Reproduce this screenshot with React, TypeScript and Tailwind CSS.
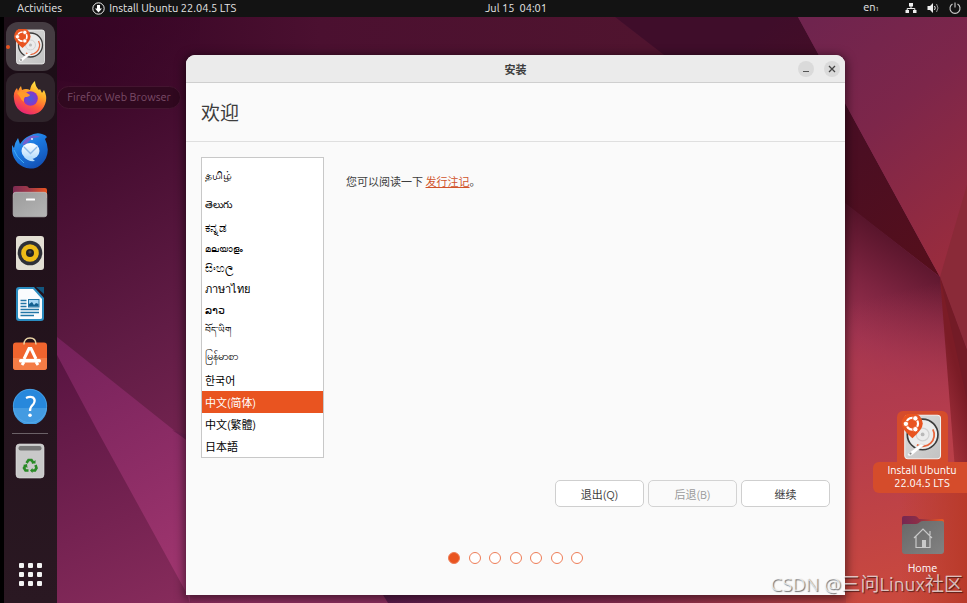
import React from "react";

const languages = [
  { name: "தமிழ்", style: "h-[34px]" },
  { name: "తెలుగు", style: "h-[26px] text-[10px]" },
  { name: "ಕನ್ನಡ", style: "h-[20px] text-[12px]" },
  { name: "മലയാളം", style: "h-[21px] text-[9px]" },
  { name: "සිංහල", style: "h-[18px]" },
  { name: "ภาษาไทย", style: "h-[24px]" },
  { name: "ລາວ", style: "h-[18px]" },
  { name: "བོད་ཡིག", style: "h-[22px] text-[9px]" },
  { name: "မြန်မာစာ", style: "h-[28px] pt-[2px]" },
  { name: "한국어", style: "h-[22px] pt-[2px]" },
  { name: "中文(简体)", style: "h-[22px] pt-[2px]" },
  { name: "中文(繁體)", style: "h-[22px] pt-[2px]" },
  { name: "日本語", style: "h-[22px] pt-[2px]" },
];

function Wallpaper() {
  return (
    <svg
      className="absolute inset-0 h-full w-full"
      viewBox="0 0 967 603"
      preserveAspectRatio="none"
      aria-hidden="true"
    >
      <defs>
        <linearGradient id="base" gradientUnits="userSpaceOnUse" x1="60" y1="60" x2="330" y2="560">
          <stop offset="0" stopColor="#350424" />
          <stop offset="0.5" stopColor="#611c45" />
          <stop offset="1" stopColor="#8f2f60" />
        </linearGradient>
        <linearGradient id="top" gradientUnits="userSpaceOnUse" x1="57" y1="0" x2="640" y2="0">
          <stop offset="0" stopColor="#340324" />
          <stop offset="0.45" stopColor="#4b1030" />
          <stop offset="1" stopColor="#50142f" />
        </linearGradient>
        <linearGradient id="ray" gradientUnits="userSpaceOnUse" x1="60" y1="340" x2="190" y2="580">
          <stop offset="0" stopColor="#75215a" />
          <stop offset="1" stopColor="#a0366f" />
        </linearGradient>
        <linearGradient id="leftDark" gradientUnits="userSpaceOnUse" x1="57" y1="340" x2="170" y2="603">
          <stop offset="0" stopColor="#561340" />
          <stop offset="1" stopColor="#862b5b" />
        </linearGradient>
        <linearGradient id="sky" gradientUnits="userSpaceOnUse" x1="800" y1="30" x2="967" y2="240">
          <stop offset="0" stopColor="#6f244e" />
          <stop offset="0.45" stopColor="#7d264a" />
          <stop offset="1" stopColor="#982c3e" />
        </linearGradient>
        <linearGradient id="shade" gradientUnits="userSpaceOnUse" x1="760" y1="30" x2="940" y2="277">
          <stop offset="0" stopColor="#3f0d2a" />
          <stop offset="1" stopColor="#560f1b" />
        </linearGradient>
        <linearGradient id="slope" gradientUnits="userSpaceOnUse" x1="925" y1="240" x2="850" y2="365">
          <stop offset="0" stopColor="#4f1126" />
          <stop offset="0.45" stopColor="#7d2440" />
          <stop offset="0.8" stopColor="#9c3250" />
          <stop offset="1" stopColor="#a83850" />
        </linearGradient>
        <linearGradient id="floor" gradientUnits="userSpaceOnUse" x1="860" y1="300" x2="930" y2="603">
          <stop offset="0" stopColor="#ab394f" stopOpacity="0" />
          <stop offset="0.4" stopColor="#b43c4d" />
          <stop offset="1" stopColor="#cb4a3d" />
        </linearGradient>
        <linearGradient id="edge" gradientUnits="userSpaceOnUse" x1="920" y1="430" x2="970" y2="416">
          <stop offset="0" stopColor="#8d2026" stopOpacity="0" />
          <stop offset="1" stopColor="#7b1c26" />
        </linearGradient>
        <linearGradient id="corner" gradientUnits="userSpaceOnUse" x1="900" y1="500" x2="967" y2="500">
          <stop offset="0" stopColor="#bb3e2c" stopOpacity="0" />
          <stop offset="1" stopColor="#b93a2a" />
        </linearGradient>
        <linearGradient id="bottom" gradientUnits="userSpaceOnUse" x1="380" y1="0" x2="900" y2="0">
          <stop offset="0" stopColor="#5a1b4b" />
          <stop offset="0.5" stopColor="#8b2d50" />
          <stop offset="1" stopColor="#c8483d" />
        </linearGradient>
      </defs>
      <rect width="967" height="603" fill="url(#base)" />
      <path d="M57 17H640L660 60H300L186 100L57 80Z" fill="url(#top)" opacity="0.6" />
      <path d="M200 17H615L680 66H200Z" fill="url(#top)" />
      <path d="M0 290L57 337L186 592L192 603H0Z" fill="url(#leftDark)" />
      <path d="M40 323L57 337L190 443V603L186 592L97 430Z" fill="url(#ray)" />
      <path d="M172 430L190 436V442Z" fill="#6d2050" />
      <path d="M615 17H798L940 277L840 200L668 58Z" fill="url(#shade)" />
      <path d="M798 17H967V300L940 277Z" fill="url(#sky)" />
      <path d="M967 185L940 277L967 350Z" fill="#8a2a38" />
      <path d="M840 199L940 277L967 400V603H840Z" fill="url(#slope)" />
      <path d="M840 300L940 277L967 400V603H840Z" fill="url(#floor)" />
      <path d="M940 277L967 350V490L955 470Z" fill="url(#edge)" />
      <path d="M940 277L967 350V400Z" fill="#731b26" />
      <path d="M900 470H967V603H900Z" fill="url(#corner)" />
      <path d="M380 590H846V603H388Z" fill="url(#bottom)" />
    </svg>
  );
}

function InstallerIcon({ className }: { className: string }) {
  return (
    <svg className={className} viewBox="0 0 36 36" aria-hidden="true">
      <defs>
        <linearGradient id="disk" x1="0" y1="0" x2="1" y2="1">
          <stop offset="0" stopColor="#dcdcdc" />
          <stop offset="1" stopColor="#c2c2c2" />
        </linearGradient>
      </defs>
      <rect x="4.500" y="1" width="28" height="34" rx="2.500" fill="url(#disk)" stroke="#f1f1f1" strokeWidth="0.800" />
      <circle cx="18.500" cy="16" r="12" fill="#ececec" stroke="#3c3c3c" strokeWidth="1.300" />
      <circle cx="18.500" cy="16" r="5" fill="none" stroke="#d2d2d2" />
      <circle cx="18.500" cy="16" r="1.500" fill="#b9b9b9" />
      <path d="M26.500 12A9 9 0 0 1 14 24" fill="none" stroke="#e9663c" strokeWidth="1.400" />
      <path d="M7 31L17 23.500L20 24L10 32.500Q6 33.500 7 31Z" fill="#fff" stroke="#ccc" strokeWidth="0.400" />
      <circle cx="9" cy="31" r="0.900" fill="#888" />
      <path d="M10.500 19Q2 12 2 7.500A8.300 8.300 0 0 1 18.600 7.500Q18.600 12 10.500 19Z" fill="#e95420" />
      <circle cx="10.300" cy="7.600" r="4.600" fill="none" stroke="#fff" strokeWidth="1.700" />
      {[[5.4, 7.7], [12.8, 3.4], [12.8, 11.9]].map(([x, y]) => (
        <circle key={y} cx={x} cy={y} r="2.100" fill="#fff" stroke="#e95420" strokeWidth="0.700" />
      ))}
    </svg>
  );
}

function FirefoxIcon() {
  return (
    <svg className="size-9" viewBox="0 0 36 36" aria-hidden="true">
      <defs>
        <linearGradient id="fox" x1="0.8" y1="0" x2="0.3" y2="1">
          <stop offset="0" stopColor="#fff44f" />
          <stop offset="0.35" stopColor="#ffab28" />
          <stop offset="0.65" stopColor="#ff5b37" />
          <stop offset="1" stopColor="#e5207b" />
        </linearGradient>
        <radialGradient id="globe">
          <stop offset="0" stopColor="#4a5bdc" />
          <stop offset="1" stopColor="#8a35c8" />
        </radialGradient>
      </defs>
      <path d="M2 19Q1 12 5 8L6 11Q7 8 9 6L10 10Q14 8 18 10Q19 4 23 1Q23 6 27 10L28 9L30 13L32 10Q35 16 34 21C32 30 26 35 18 34.500S3 29 2 19Z" fill="url(#fox)" />
      <circle cx="18.500" cy="18.500" r="7.300" fill="url(#globe)" />
      <path d="M5 13L9 11L15 13L18 15Q17 17 13 17Q11 19 12 22Q9 20 8 17Z" fill="#ff9a28" />
    </svg>
  );
}

function ThunderbirdIcon() {
  return (
    <svg className="size-9" viewBox="0 0 36 36" aria-hidden="true">
      <defs>
        <linearGradient id="bird" x1="0" y1="0" x2="0.6" y2="1">
          <stop offset="0" stopColor="#3aa6f6" />
          <stop offset="0.5" stopColor="#1b78df" />
          <stop offset="1" stopColor="#1353b8" />
        </linearGradient>
        <linearGradient id="mail" x1="0" y1="0" x2="0" y2="1">
          <stop offset="0" stopColor="#ffffff" />
          <stop offset="1" stopColor="#b5dcfc" />
        </linearGradient>
      </defs>
      <path d="M0 12L2 15Q3 9 6 5L8 11Q12 5 17 3Q24 -1 30 1Q34 2 35 4L33 6Q38 16 34 25C30 33 24 36 18 35.500C8 35 1 27 0 18Z" fill="url(#bird)" />
      <path d="M10 12Q13 4 21 2.500Q26 2 28 4Q20 4 14 11Z" fill="#7461cf" />
      <path d="M2 17Q4 24 12 30" fill="none" stroke="#42adf5" />
      <ellipse cx="18.500" cy="18" rx="9" ry="8" fill="url(#mail)" />
      <path d="M12 24Q16 29 23 28Q20 26 20 23Z" fill="#b5dcfc" />
      <path d="M12 14L18.500 20.500L25 14" fill="none" stroke="#8fbbe8" strokeWidth="1.400" />
      <circle cx="20" cy="6" r="0.900" fill="#fff" />
    </svg>
  );
}

function FilesIcon() {
  return (
    <svg className="size-9" viewBox="0 0 36 36" aria-hidden="true">
      <defs>
        <linearGradient id="tab" x1="0" x2="1">
          <stop offset="0" stopColor="#7c2a52" />
          <stop offset="0.5" stopColor="#a33a48" />
          <stop offset="1" stopColor="#e95420" />
        </linearGradient>
        <linearGradient id="drawer" x1="0" y1="0" x2="1" y2="1">
          <stop offset="0" stopColor="#9b9b9b" />
          <stop offset="1" stopColor="#b5b5b5" />
        </linearGradient>
      </defs>
      <path d="M1 4Q1 2 3 2H14Q16 2 17 4H33Q35 4 35 6V14H1Z" fill="url(#tab)" />
      <rect x="1.200" y="8.300" width="33.600" height="24.500" rx="2.500" fill="url(#drawer)" stroke="#c2c2c2" strokeWidth="0.700" />
      <rect x="14" y="14.500" width="9" height="2" rx="0.500" fill="#fff" />
    </svg>
  );
}

function RhythmboxIcon() {
  return (
    <svg className="size-9" viewBox="0 0 36 36" aria-hidden="true">
      <rect x="4" y="1" width="28" height="34" rx="3" fill="#e3dfd3" />
      <circle cx="18" cy="18" r="12.300" fill="#2e3037" />
      <circle cx="18" cy="18" r="8.800" fill="#eebb17" />
      <circle cx="18" cy="18" r="4" fill="#202126" />
      <circle cx="18" cy="17" r="1.600" fill="#45474d" />
    </svg>
  );
}

function WriterIcon() {
  return (
    <svg className="size-9" viewBox="0 0 36 36" aria-hidden="true">
      <path d="M7 1H22L32 12V32Q32 35 29 35H7Q4 35 4 32V4Q4 1 7 1Z" fill="#2a8cc0" />
      <path d="M24 1H32V8Z" fill="#12567e" />
      <path d="M8 3H21L30 13V32Q30 33 28 33H8Q6 33 6 31V5Q6 3 8 3Z" fill="#fafcfe" />
      <path d="M8.500 14.500H14.500M8.500 17.500H14.500M8.500 20.500H14.500M8.500 23.500H27M8.500 26.500H27M8.500 29.500H22" stroke="#2276a6" strokeWidth="1.400" />
      <rect x="16.500" y="13.500" width="10.500" height="7.500" fill="#a7d6f4" stroke="#2276a6" />
      <path d="M17 20.500V18L20 16L22 19L24 17L26.500 18V20.500Z" fill="#146090" />
    </svg>
  );
}

function SoftwareIcon() {
  return (
    <svg className="size-9" viewBox="0 0 36 36" aria-hidden="true">
      <rect x="1" y="5.500" width="34" height="27.500" rx="3" fill="#f0642e" />
      <path d="M1 21H35V30Q35 33 32 33H4Q1 33 1 30Z" fill="#f47c46" />
      <path d="M12 7.500Q12 1 18 1T24 7.500" fill="none" stroke="#ead5a7" strokeWidth="1.400" />
      <path d="M12 22L17 11.500H19L24 22M10 28L12 25M26 28L24 25" fill="none" stroke="#fff" strokeWidth="3" />
      <rect x="7" y="22" width="22" height="3.500" rx="1.500" fill="#fff" />
    </svg>
  );
}

function HelpIcon() {
  return (
    <svg className="size-9" viewBox="0 0 36 36" aria-hidden="true">
      <circle cx="18" cy="18" r="17" fill="#2788dc" />
      <path d="M1 20H35A17 17 0 0 1 1 20Z" fill="#439be2" />
      <circle cx="18" cy="18" r="16.700" fill="none" stroke="#5cb1ee" strokeWidth="0.600" />
      <path d="M14 10Q18 8 21 9.500Q24 12 21.500 16Q18 19 18 23" fill="none" stroke="#fff" strokeWidth="2.300" />
      <circle cx="18" cy="27.300" r="1.800" fill="#fff" />
    </svg>
  );
}

function TrashIcon() {
  return (
    <svg className="size-9" viewBox="0 0 36 36" aria-hidden="true">
      <rect x="4" y="1" width="28" height="34" rx="3.500" fill="#c9c9c9" stroke="#e4e4e4" strokeWidth="0.600" />
      <rect x="6.500" y="3" width="23" height="4.500" rx="2" fill="#777" />
      <g fill="none" stroke="#2a8a26" strokeWidth="2.600">
        <path d="M14.500 20L16.500 17H19.500L21.500 20" />
        <path d="M23.500 22L24.500 25L23 27.500H20" />
        <path d="M16.500 27.500H13.500L12 25L13.500 22.500" />
      </g>
      <path d="M19.500 20.500L23.500 20.500L23.500 17ZM20.500 25V30L18 27.500ZM11 22L15 21L15.500 25Z" fill="#2a8a26" />
    </svg>
  );
}

function HomeFolder() {
  return (
    <svg className="h-[40px] w-[44px]" viewBox="0 0 44 40" aria-hidden="true">
      <defs>
        <linearGradient id="homeTab" x1="0" x2="1">
          <stop offset="0" stopColor="#762752" />
          <stop offset="0.4" stopColor="#8d2e46" />
          <stop offset="1" stopColor="#ed5a22" />
        </linearGradient>
        <linearGradient id="homeBody" x1="0" y1="0" x2="1" y2="1">
          <stop offset="0" stopColor="#686868" />
          <stop offset="1" stopColor="#828282" />
        </linearGradient>
      </defs>
      <path d="M1 3Q1 1 3 1H14Q16 1 18 4H41Q43 4 43 6V15H1Z" fill="url(#homeTab)" />
      <path d="M1 11Q1 9 3 9H15Q17 9 19 7Q20 6 22 6H41Q43 6 43 8V36Q43 39 40 39H4Q1 39 1 36Z" fill="url(#homeBody)" />
      <path d="M13 23L22 14L31 23M15 21.500V32.500H29V21.500M29 16V20" fill="none" stroke="#c9c9c9" strokeWidth="1.200" />
      <rect x="21" y="25" width="4" height="7.500" fill="#c9c9c9" />
    </svg>
  );
}

const dockApps = [
  { name: "Thunderbird Mail", icon: <ThunderbirdIcon /> },
  { name: "Files", icon: <FilesIcon /> },
  { name: "Rhythmbox", icon: <RhythmboxIcon /> },
  { name: "LibreOffice Writer", icon: <WriterIcon /> },
  { name: "Ubuntu Software", icon: <SoftwareIcon /> },
  { name: "Help", icon: <HelpIcon /> },
];

function TopBar() {
  return (
    <header className="relative grid h-[17px] shrink-0 grid-cols-[485fr_auto_420fr] items-center bg-[#131313] pb-[2px] text-[11px] leading-[15px] text-[#e6e6e6]">
      <div className="flex items-center gap-[30px] pl-[17px]">
        <button type="button">Activities</button>
        <button type="button" className="flex items-center gap-1">
          <svg className="size-[13px]" viewBox="0 0 13 13" aria-hidden="true">
            <circle cx="6.500" cy="6.500" r="5.700" fill="none" stroke="#eee" />
            <path d="M5 3H8V6.500H10L6.500 10.500L3 6.500H5Z" fill="#fff" />
          </svg>
          Install Ubuntu 22.04.5 LTS
        </button>
      </div>
      <button type="button" className="whitespace-pre">Jul 15  04:01</button>
      <div className="flex items-center justify-end pr-[6px]">
        <button type="button" className="mr-[26px] flex items-baseline">
          en<span className="text-[6px]">1</span>
        </button>
        <button type="button" aria-label="System menu" className="flex items-center gap-[10px]">
          <svg className="size-[12px]" viewBox="0 0 12 12" aria-hidden="true">
            <path d="M4 1H8V4.500H4ZM0.500 8H4V11H0.500ZM8 8H11.500V11H8Z" fill="#eee" />
            <path d="M6 4V6.500M2.200 8V6.500H9.800V8" fill="none" stroke="#eee" />
          </svg>
          <svg className="size-[12px]" viewBox="0 0 12 12" aria-hidden="true">
            <path d="M0.500 4H3L6 1V11L3 8H0.500Z" fill="#eee" />
            <path d="M7.500 4Q9 6 7.500 8" fill="none" stroke="#eee" />
            <path d="M9.500 2Q12.500 6 9.500 10" fill="none" stroke="#999" />
          </svg>
          <svg className="size-[12px]" viewBox="0 0 12 12" aria-hidden="true">
            <path d="M3.500 2A5 5 0 1 0 8.500 2M6 0.500V5.500" fill="none" stroke="#ccc" strokeWidth="1.100" />
          </svg>
        </button>
      </div>
    </header>
  );
}

function Dock() {
  return (
    <nav
      aria-label="Dock"
      className="flex w-[57px] shrink-0 flex-col items-center border-l-4 border-black bg-linear-to-b from-[#1b0d16] to-[#2a1822] pt-[5px] pr-px pb-[17px]"
    >
      <button
        type="button"
        aria-label="Install Ubuntu 22.04.5 LTS"
        className="relative flex size-[49px] items-center justify-center rounded-xl bg-[#453c42]"
      >
        <span className="absolute left-0 size-1 rounded-full bg-[#e95420]" />
        <InstallerIcon className="size-9" />
      </button>
      <button
        type="button"
        aria-label="Firefox Web Browser"
        className="mt-[2px] mb-[11px] flex size-[49px] items-center justify-center rounded-xl bg-[#2f242b]"
      >
        <FirefoxIcon />
      </button>
      <div className="flex flex-col gap-[15px]">
        {dockApps.map((app) => (
          <button key={app.name} type="button" aria-label={app.name}>
            {app.icon}
          </button>
        ))}
      </div>
      <hr className="mt-[9px] mb-[9px] w-9 border-[#6b6167]" />
      <button type="button" aria-label="Trash">
        <TrashIcon />
      </button>
      <button type="button" aria-label="Show Applications" className="mt-auto grid grid-cols-3 gap-1">
        {Array.from({ length: 9 }, (_, i) => (
          <span key={i} className="size-[5px] rounded-[1px] bg-[#f3f3f3]" />
        ))}
      </button>
    </nav>
  );
}

function InstallerWindow() {
  return (
    <main className="mt-[38px] mb-[8px] flex min-w-0 flex-1 flex-col overflow-hidden rounded-t-[9px] bg-[#fafafa] text-[#3d3d3d] shadow-[0_2px_10px_2px_rgba(0,0,0,0.5)]">
      <div className="grid h-[28px] shrink-0 grid-cols-[1fr_auto_1fr] items-center border-b border-[#cfcfcf] bg-[#ebebeb]">
        <h1 className="col-start-2 pt-[2px] text-[11px] leading-4 font-bold">安装</h1>
        <div className="flex justify-end gap-[10px] pr-[5px]">
          <button type="button" aria-label="Minimize" className="flex size-4 items-center justify-center rounded-full bg-[#dadada]">
            <svg className="size-2" viewBox="0 0 8 8" aria-hidden="true">
              <path d="M1 6.500H7" stroke="#555" />
            </svg>
          </button>
          <button type="button" aria-label="Close" className="flex size-4 items-center justify-center rounded-full bg-[#dadada]">
            <svg className="size-2" viewBox="0 0 8 8" aria-hidden="true">
              <path d="M1 1L7 7M7 1L1 7" stroke="#444" strokeWidth="1.300" />
            </svg>
          </button>
        </div>
      </div>
      <div className="flex h-[59px] shrink-0 items-center border-b border-[#dfdfdf] px-[15px] pt-[2px]">
        <h2 className="text-[19px] leading-6">欢迎</h2>
      </div>
      <div className="flex flex-1 flex-col px-[15px] pt-[15px] pb-[31px]">
        <div className="flex items-start gap-[22px]">
          <fieldset
            aria-label="Language"
            className="w-[123px] border border-[#c8c8c8] bg-white text-[11px] leading-4 text-black"
          >
            {languages.map((language) => (
              <label
                key={language.name}
                className={`flex items-center px-[3px] whitespace-nowrap has-checked:bg-[#e95420] has-checked:text-white ${language.style}`}
              >
                <input
                  type="radio"
                  name="language"
                  className="size-0 appearance-none"
                  defaultChecked={language.name === "中文(简体)"}
                />
                {language.name}
              </label>
            ))}
          </fieldset>
          <p className="pt-[17px] text-[11px] leading-4">
            您可以阅读一下{" "}
            <a href="#release-notes" className="text-[#d0532b] underline">
              发行注记
            </a>
            。
          </p>
        </div>
        <div className="mt-[22px] flex justify-end gap-1 text-[11px] leading-4">
          <button type="button" className="h-[27px] w-[89px] rounded-[5px] border border-[#cfcfcf] bg-white pt-[2px]">
            退出(Q)
          </button>
          <button type="button" disabled className="h-[27px] w-[89px] rounded-[5px] border border-[#d3d3d3] bg-[#fafafa] pt-[2px] text-[#9a9a9a]">
            后退(B)
          </button>
          <button type="button" className="h-[27px] w-[89px] rounded-[5px] border border-[#cfcfcf] bg-white pt-[2px]">
            继续
          </button>
        </div>
        <ol aria-label="Installation steps" className="mx-auto mt-auto flex w-[135px] justify-between">
          {Array.from({ length: 7 }, (_, i) => (
            <li
              key={i}
              className={`size-3 rounded-full border border-[#ee7d57] ${i === 0 ? "bg-[#e95420]" : "bg-white"}`}
            />
          ))}
        </ol>
      </div>
    </main>
  );
}

export default function App() {
  return (
    <div className="relative flex h-screen flex-col overflow-hidden bg-[#3c0a29] font-['Ubuntu','Noto_Sans','Noto_Sans_CJK_SC',sans-serif]">
      <Wallpaper />
      <TopBar />
      <div className="relative flex min-h-0 flex-1">
        <Dock />
        <div className="w-[129px] shrink-0 pt-[69px]">
          <div
            role="tooltip"
            className="flex h-[23px] w-[124px] items-center justify-center rounded-full border border-[#441530] bg-[#30081f] text-[11px] whitespace-nowrap text-[#7b4c68]"
          >
            Firefox Web Browser
          </div>
        </div>
        <InstallerWindow />
        <div className="flex w-[122px] shrink-0 flex-col items-end justify-end pb-[28px] text-center text-[11px] leading-[13px] text-white">
          <button type="button" className="flex w-[94px] flex-col items-center">
            <span className="ml-1 flex size-[51px] items-center justify-center rounded-t-md bg-[#d54c2b]">
              <InstallerIcon className="size-[46px]" />
            </span>
            <span className="w-full rounded-l-md bg-[#d54c2b] pt-[2px] pb-[3px] pl-1 whitespace-nowrap">
              Install Ubuntu
              <br />
              22.04.5 LTS
            </span>
          </button>
          <button type="button" className="mt-[22px] flex w-[89px] flex-col items-center gap-[7px]">
            <HomeFolder />
            Home
          </button>
        </div>
      </div>
      <p className="absolute right-1 bottom-[7px] text-[19px] leading-6 whitespace-nowrap text-white/70 [text-shadow:1px_1px_1px_rgba(0,0,0,0.55)]">
        CSDN @三问Linux社区
      </p>
    </div>
  );
}
